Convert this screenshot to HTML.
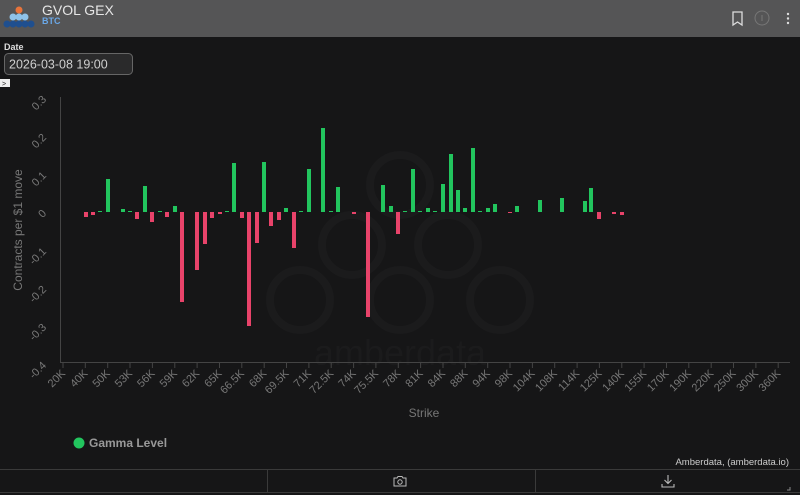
<!DOCTYPE html>
<html><head><meta charset="utf-8"><style>
html,body{margin:0;padding:0;background:#161617;width:800px;height:495px;overflow:hidden;font-family:"Liberation Sans",sans-serif}
</style></head><body>
<svg width="800" height="495" xmlns="http://www.w3.org/2000/svg" font-family="Liberation Sans, sans-serif">
<rect width="800" height="495" fill="#161617"/>
<rect width="800" height="37" fill="#555556"/>
<circle cx="19" cy="10" r="3.5" fill="#e8743b"/>
<circle cx="13" cy="17" r="3.5" fill="#8fc3ea"/><circle cx="19" cy="17" r="3.5" fill="#8fc3ea"/><circle cx="25" cy="17" r="3.5" fill="#8fc3ea"/>
<circle cx="7" cy="24" r="3.5" fill="#1f4f8f"/><circle cx="13" cy="24" r="3.5" fill="#1f4f8f"/><circle cx="19" cy="24" r="3.5" fill="#1f4f8f"/><circle cx="25" cy="24" r="3.5" fill="#1f4f8f"/><circle cx="31" cy="24" r="3.5" fill="#1f4f8f"/>
<text x="42" y="15" fill="#e6e6e6" font-size="14">GVOL GEX</text>
<text x="42" y="24" fill="#6aa8e8" font-size="9" font-weight="bold">BTC</text>
<path d="M733 12 h9 v13 l-4.5 -3 l-4.5 3 z" fill="none" stroke="#ddd" stroke-width="1.3"/>
<circle cx="762" cy="18" r="7" fill="none" stroke="#777" stroke-width="1"/>
<line x1="762" y1="15" x2="762" y2="21" stroke="#777"/>
<circle cx="788" cy="14" r="1.2" fill="#ddd"/><circle cx="788" cy="18.5" r="1.2" fill="#ddd"/><circle cx="788" cy="23" r="1.2" fill="#ddd"/>
<text x="4" y="50" fill="#ddd" font-size="9" font-weight="bold">Date</text>
<rect x="4.5" y="53.5" width="128" height="21" rx="4" fill="#2a2a2b" stroke="#666"/>
<text x="9" y="68.5" fill="#cfcfcf" font-size="12.5">2026-03-08 19:00</text>
<rect x="0" y="79" width="10" height="8" fill="#eee"/>
<text x="2" y="86" fill="#222" font-size="7">&gt;</text>
<g fill="none" stroke="#1b1b1c" stroke-width="8">
<circle cx="400" cy="185" r="30"/><circle cx="352" cy="245" r="30"/><circle cx="448" cy="245" r="30"/>
<circle cx="300" cy="300" r="30"/><circle cx="400" cy="300" r="30"/><circle cx="500" cy="300" r="30"/>
</g>
<text x="400" y="365" fill="#1b1b1c" font-size="36" text-anchor="middle">amberdata</text>
<line x1="60.5" y1="97" x2="60.5" y2="363" stroke="#444"/>
<line x1="60" y1="362.5" x2="790" y2="362.5" stroke="#444"/>
<g fill="#777" font-size="11" text-anchor="end">
<text transform="translate(47,100) rotate(-45)">0.3</text>
<text transform="translate(47,138) rotate(-45)">0.2</text>
<text transform="translate(47,176) rotate(-45)">0.1</text>
<text transform="translate(47,214) rotate(-45)">0</text>
<text transform="translate(47,252) rotate(-45)">-0.1</text>
<text transform="translate(47,290) rotate(-45)">-0.2</text>
<text transform="translate(47,328) rotate(-45)">-0.3</text>
<text transform="translate(47,366) rotate(-45)">-0.4</text>
</g>
<text transform="translate(22,230) rotate(-90)" fill="#777" font-size="12" text-anchor="middle">Contracts per $1 move</text>
<g stroke="#444">
<path d="M63 363v5M85.3 363v5M107.7 363v5M130 363v5M152.4 363v5M174.8 363v5M197.1 363v5M219.5 363v5M241.8 363v5M264.2 363v5M286.5 363v5M308.9 363v5M331.2 363v5M353.6 363v5M375.9 363v5M398.3 363v5M420.6 363v5M443 363v5M465.3 363v5M487.7 363v5M510 363v5M532.4 363v5M554.7 363v5M577.1 363v5M599.4 363v5M621.8 363v5M644.1 363v5M666.5 363v5M688.8 363v5M711.2 363v5M733.5 363v5M755.9 363v5M778.2 363v5"/>
</g>
<g fill="#777" font-size="11" text-anchor="end">
<text transform="translate(66,374) rotate(-45)">20K</text>
<text transform="translate(88.3,374) rotate(-45)">40K</text>
<text transform="translate(110.7,374) rotate(-45)">50K</text>
<text transform="translate(133,374) rotate(-45)">53K</text>
<text transform="translate(155.4,374) rotate(-45)">56K</text>
<text transform="translate(177.8,374) rotate(-45)">59K</text>
<text transform="translate(200.1,374) rotate(-45)">62K</text>
<text transform="translate(222.5,374) rotate(-45)">65K</text>
<text transform="translate(244.8,374) rotate(-45)">66.5K</text>
<text transform="translate(267.2,374) rotate(-45)">68K</text>
<text transform="translate(289.5,374) rotate(-45)">69.5K</text>
<text transform="translate(311.9,374) rotate(-45)">71K</text>
<text transform="translate(334.2,374) rotate(-45)">72.5K</text>
<text transform="translate(356.6,374) rotate(-45)">74K</text>
<text transform="translate(378.9,374) rotate(-45)">75.5K</text>
<text transform="translate(401.3,374) rotate(-45)">78K</text>
<text transform="translate(423.6,374) rotate(-45)">81K</text>
<text transform="translate(446,374) rotate(-45)">84K</text>
<text transform="translate(468.3,374) rotate(-45)">88K</text>
<text transform="translate(490.7,374) rotate(-45)">94K</text>
<text transform="translate(513,374) rotate(-45)">98K</text>
<text transform="translate(535.4,374) rotate(-45)">104K</text>
<text transform="translate(557.7,374) rotate(-45)">108K</text>
<text transform="translate(580.1,374) rotate(-45)">114K</text>
<text transform="translate(602.4,374) rotate(-45)">125K</text>
<text transform="translate(624.8,374) rotate(-45)">140K</text>
<text transform="translate(647.1,374) rotate(-45)">155K</text>
<text transform="translate(669.5,374) rotate(-45)">170K</text>
<text transform="translate(691.8,374) rotate(-45)">190K</text>
<text transform="translate(714.2,374) rotate(-45)">220K</text>
<text transform="translate(736.5,374) rotate(-45)">250K</text>
<text transform="translate(758.9,374) rotate(-45)">300K</text>
<text transform="translate(781.2,374) rotate(-45)">360K</text>
</g>
<text x="424" y="417" fill="#777" font-size="12" text-anchor="middle">Strike</text>
<g fill="#22c55e">
<rect x="98" y="211" width="4" height="1"/>
<rect x="106" y="179" width="4" height="33"/>
<rect x="121" y="209" width="4" height="3"/>
<rect x="128" y="211" width="4" height="1"/>
<rect x="143" y="186" width="4" height="26"/>
<rect x="158" y="211" width="4" height="1"/>
<rect x="173" y="206" width="4" height="6"/>
<rect x="225" y="211" width="4" height="1"/>
<rect x="232" y="163" width="4" height="49"/>
<rect x="262" y="162" width="4" height="50"/>
<rect x="284" y="208" width="4" height="4"/>
<rect x="299" y="211" width="4" height="1"/>
<rect x="307" y="169" width="4" height="43"/>
<rect x="321" y="128" width="4" height="84"/>
<rect x="329" y="211" width="4" height="1"/>
<rect x="336" y="187" width="4" height="25"/>
<rect x="381" y="185" width="4" height="27"/>
<rect x="389" y="206" width="4" height="6"/>
<rect x="403" y="211" width="4" height="1"/>
<rect x="411" y="169" width="4" height="43"/>
<rect x="418" y="211" width="4" height="1"/>
<rect x="426" y="208" width="4" height="4"/>
<rect x="433" y="211" width="4" height="1"/>
<rect x="441" y="184" width="4" height="28"/>
<rect x="449" y="154" width="4" height="58"/>
<rect x="456" y="190" width="4" height="22"/>
<rect x="463" y="208" width="4" height="4"/>
<rect x="471" y="148" width="4" height="64"/>
<rect x="478" y="211" width="4" height="1"/>
<rect x="486" y="208" width="4" height="4"/>
<rect x="493" y="204" width="4" height="8"/>
<rect x="515" y="206" width="4" height="6"/>
<rect x="538" y="200" width="4" height="12"/>
<rect x="560" y="198" width="4" height="14"/>
<rect x="583" y="201" width="4" height="11"/>
<rect x="589" y="188" width="4" height="24"/>
</g>
<g fill="#e8436a">
<rect x="84" y="212" width="4" height="5"/>
<rect x="91" y="212" width="4" height="3"/>
<rect x="135" y="212" width="4" height="7"/>
<rect x="150" y="212" width="4" height="10"/>
<rect x="165" y="212" width="4" height="5"/>
<rect x="180" y="212" width="4" height="90"/>
<rect x="195" y="212" width="4" height="58"/>
<rect x="203" y="212" width="4" height="32"/>
<rect x="210" y="212" width="4" height="6"/>
<rect x="218" y="212" width="4" height="2"/>
<rect x="240" y="212" width="4" height="6"/>
<rect x="247" y="212" width="4" height="114"/>
<rect x="255" y="212" width="4" height="31"/>
<rect x="269" y="212" width="4" height="14"/>
<rect x="277" y="212" width="4" height="8"/>
<rect x="292" y="212" width="4" height="36"/>
<rect x="352" y="212" width="4" height="2"/>
<rect x="366" y="212" width="4" height="105"/>
<rect x="396" y="212" width="4" height="22"/>
<rect x="508" y="212" width="4" height="1"/>
<rect x="597" y="212" width="4" height="7"/>
<rect x="612" y="212" width="4" height="2"/>
<rect x="620" y="212" width="4" height="3"/>
</g>
<circle cx="79" cy="443" r="5.5" fill="#22c55e"/>
<text x="89" y="447" fill="#999" font-size="12" font-weight="bold">Gamma Level</text>
<text x="789" y="465" fill="#ccc" font-size="9.5" text-anchor="end">Amberdata, (amberdata.io)</text>
<line x1="0" y1="469.5" x2="800" y2="469.5" stroke="#3a3a3a"/>
<line x1="0" y1="492.5" x2="800" y2="492.5" stroke="#3a3a3a"/>
<line x1="267.5" y1="470" x2="267.5" y2="492" stroke="#3a3a3a"/>
<line x1="535.5" y1="470" x2="535.5" y2="492" stroke="#3a3a3a"/>
<path d="M394 478 h3 l1 -1.5 h4 l1 1.5 h3 v8 h-12 z" fill="none" stroke="#bbb" stroke-width="1"/>
<circle cx="400" cy="482" r="2.2" fill="none" stroke="#bbb"/>
<path d="M668 475 v8 M664.5 480 l3.5 3.5 l3.5 -3.5 M662 484 v3 h12 v-3" fill="none" stroke="#bbb" stroke-width="1.1"/>
<path d="M790 487 v3 h-3" fill="none" stroke="#888"/>
</svg>
</body></html>
